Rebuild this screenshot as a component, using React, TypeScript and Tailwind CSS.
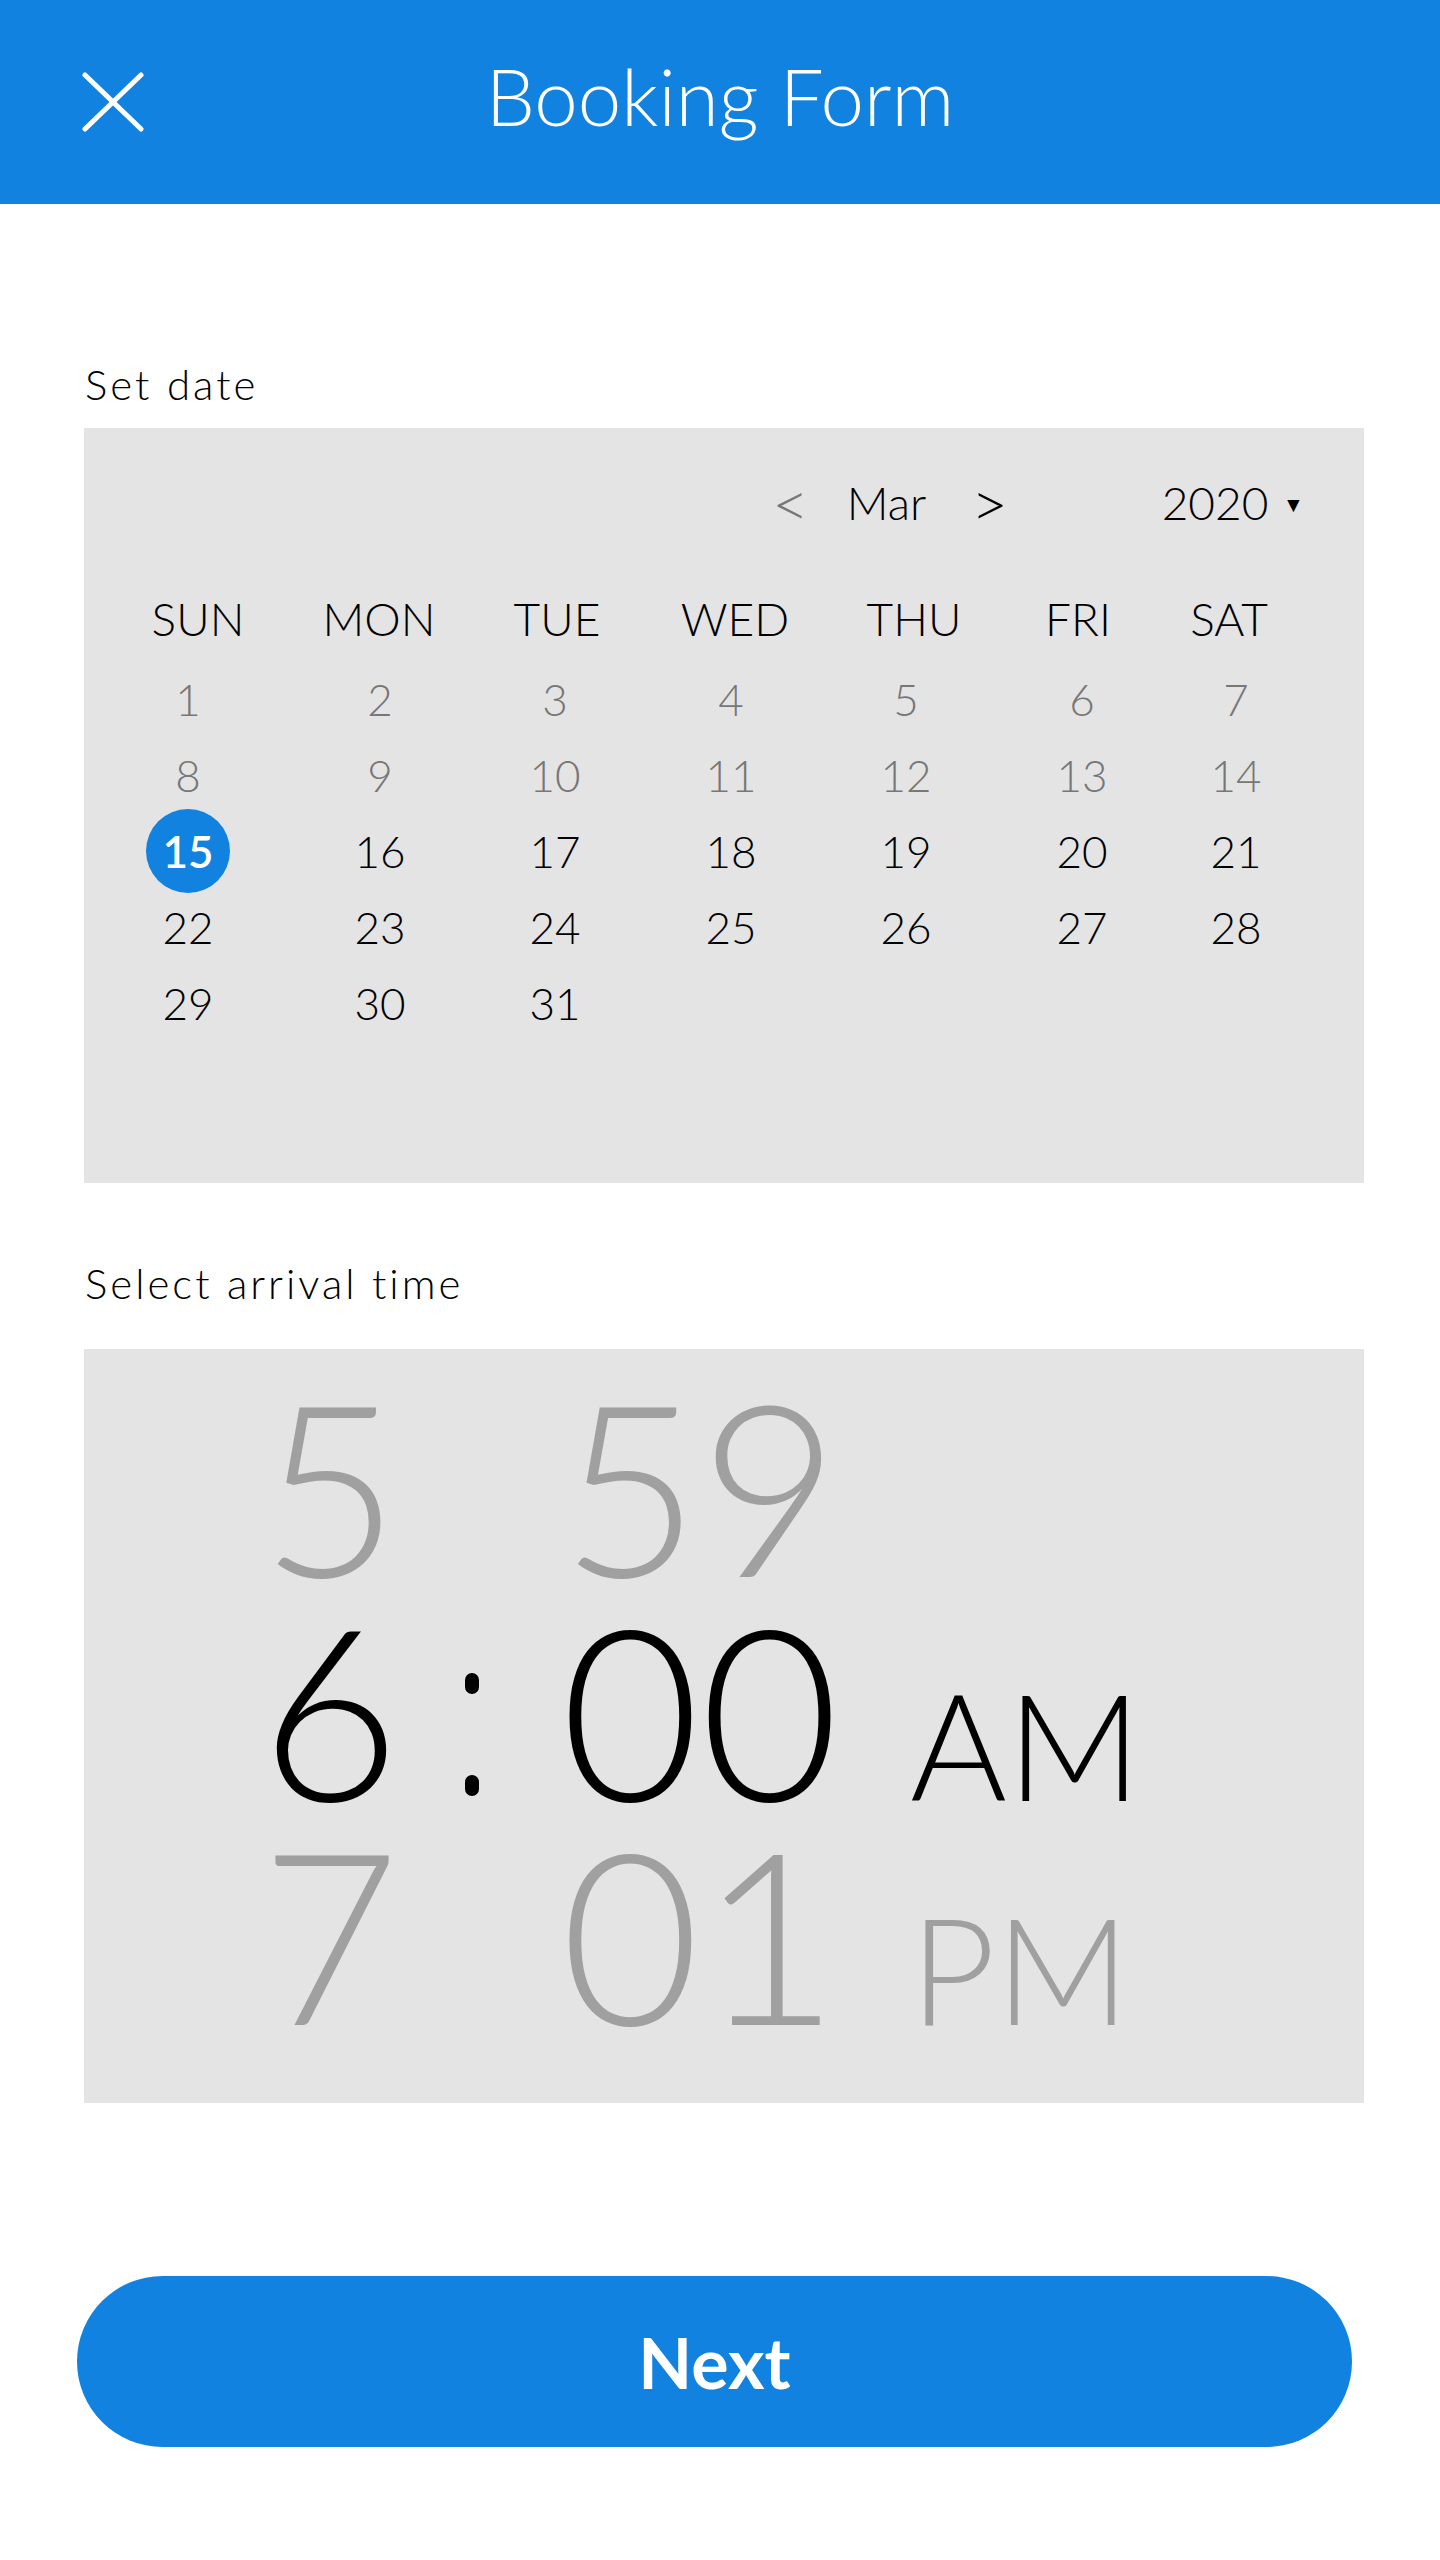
import React from 'react'

const dateCols = 'grid grid-cols-[192px_192px_158px_194px_156px_196px_112px]'
const headCols = 'grid grid-cols-[212px_150px_206px_150px_208px_120px_182px]'

const days = ['SUN', 'MON', 'TUE', 'WED', 'THU', 'FRI', 'SAT']
const dates = Array.from({ length: 31 }, (_, i) => i + 1)

function CloseIcon() {
  return (
    <svg width="62" height="60" viewBox="0 0 62 60" fill="none">
      <line x1="3" y1="3" x2="59" y2="57" stroke="white" strokeWidth="5" strokeLinecap="round" />
      <line x1="59" y1="3" x2="3" y2="57" stroke="white" strokeWidth="5" strokeLinecap="round" />
    </svg>
  )
}

function Calendar() {
  return (
    <div className="ml-[84px] w-[1280px] h-[755px] bg-[#e4e4e4] pt-[47px]">
      {/* month / year row */}
      <div className="flex items-center h-[56px] pl-[688px] text-[46px] font-light leading-none text-black">
        <span className="w-[28px] text-center text-[64px] text-[#777777]">&lt;</span>
        <span className="ml-[44px] w-[85px] text-center">Mar</span>
        <span className="ml-[42px] w-[28px] text-center text-[64px]">&gt;</span>
        <span className="ml-[162px] w-[108px] text-center">2020</span>
        <span className="ml-[14px] text-[21px]">▼</span>
      </div>

      {/* weekday headers */}
      <div className={`${headCols} mt-[50px] pl-[8px] h-[76px] items-center text-[46px] font-light text-black`}>
        {days.map(d => (
          <div key={d} className="text-center leading-none">{d}</div>
        ))}
      </div>

      {/* dates */}
      <div className={`${dateCols} mt-[4px] pl-[8px] auto-rows-[76px] items-center text-[44px] font-light`}>
        {dates.map(n => (
          <div key={n} className="flex justify-center">
            {n === 15 ? (
              <span className="w-[84px] h-[84px] rounded-full bg-[#1282e0] text-white font-semibold flex items-center justify-center leading-none">
                15
              </span>
            ) : (
              <span className={`leading-none ${n < 15 ? 'text-[#777777]' : 'text-black'}`}>{n}</span>
            )}
          </div>
        ))}
      </div>
    </div>
  )
}

function Colon() {
  return (
    <div className="w-[84px] self-end mb-[24px] flex flex-col items-center gap-[81px]">
      <span className="w-[14px] h-[21px] rounded-full bg-black" />
      <span className="w-[14px] h-[21px] rounded-full bg-black" />
    </div>
  )
}

function TimeRow({ hour, minute, period, active }: { hour: string; minute: string; period?: string; active?: boolean }) {
  const color = active ? 'text-black' : 'text-[#a0a0a0]'
  return (
    <div className={`flex items-baseline h-[224px] ${color}`}>
      <span className="w-[200px] text-center text-[240px] leading-[224px] font-light">{hour}</span>
      {active ? <Colon /> : <span className="w-[84px]" />}
      <span className="w-[372px] text-center text-[240px] leading-[224px] font-light">{minute}</span>
      {period && <span className="pl-[24px] text-[148px] leading-[224px] font-light">{period}</span>}
    </div>
  )
}

export default function App() {
  return (
    <div className="w-[1440px] min-h-[2560px] bg-white font-['Lato',sans-serif] pb-[100px]">
      <header className="h-[204px] bg-[#1282e0] grid grid-cols-[1fr_auto_1fr] items-center">
        <div className="pl-[82px] flex">
          <CloseIcon />
        </div>
        <h1 className="text-white text-[78px] font-light leading-none mb-[12px]">Booking Form</h1>
        <div />
      </header>

      <p className="mt-[156px] ml-[85px] text-[42px] leading-[48px] font-light tracking-[3px] text-black">Set date</p>
      <div className="mt-[20px]">
        <Calendar />
      </div>

      <p className="mt-[76px] ml-[85px] text-[42px] leading-[48px] font-light tracking-[3px] text-black">
        Select arrival time
      </p>
      <div className="mt-[42px] ml-[84px] w-[1280px] h-[754px] bg-[#e4e4e4] pt-[23px] pl-[146px]">
        <TimeRow hour="5" minute="59" />
        <TimeRow hour="6" minute="00" period="AM" active />
        <TimeRow hour="7" minute="01" period="PM" />
      </div>

      <button className="mt-[173px] ml-[77px] w-[1275px] h-[171px] rounded-full bg-[#1282e0] text-white text-[70px] font-bold leading-none">
        Next
      </button>
    </div>
  )
}
